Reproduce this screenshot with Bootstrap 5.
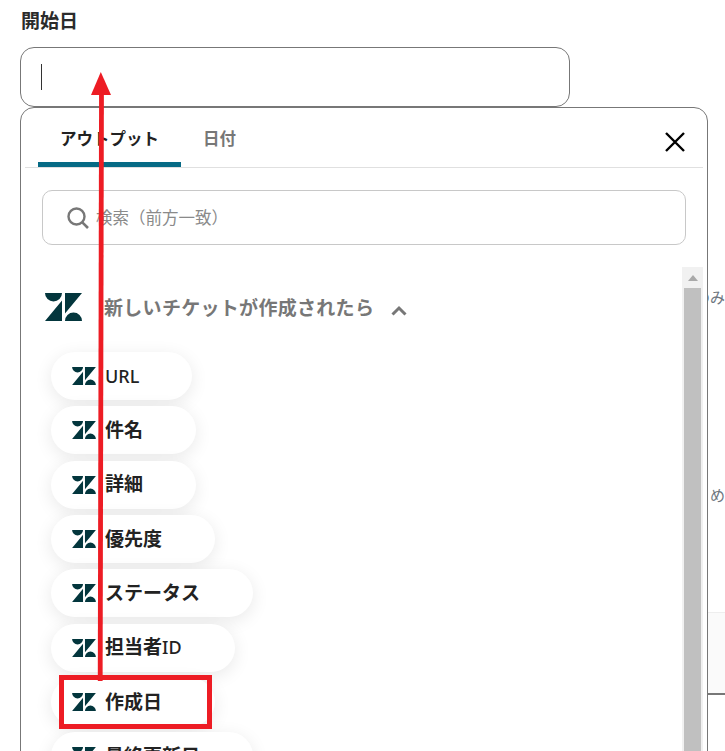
<!DOCTYPE html>
<html lang="ja">
<head>
<meta charset="utf-8">
<title>開始日</title>
<link href="https://cdn.jsdelivr.net/npm/bootstrap@5.3.0/dist/css/bootstrap.min.css" rel="stylesheet">
<style>
html,body{margin:0;height:751px;overflow:hidden;background:#fff;}
body{font-family:"Noto Sans CJK JP","Noto Sans",sans-serif;color:#222;position:relative;}
.pg-label{font-size:19px;font-weight:700;line-height:26px;margin:7px 0 14px 21px;color:#2b2b2b;}
.pg-input{width:550px;height:60px;margin-left:20px;border:1px solid #777;border-radius:14px;padding-left:20px;}
.pg-caret{width:1px;height:26px;background:#333;}
.bg-note{font-size:15px;color:#6e7780;line-height:22px;white-space:nowrap;}
.bg-a{margin-top:179px;}
.bg-b{margin-top:176px;}
.bg-row{margin:106px 0 0 auto;width:17px;height:83px;background:#fafafa;border-top:1px solid #eee;border-bottom:2px solid #777;}
.pop{position:absolute;left:20px;top:107px;width:688px;height:660px;background:#fff;border:1px solid #777;border-radius:14px;padding:0 4px;}
.pop-tabs{height:60px;border-bottom:1px solid #e0e0e0;padding-left:13px;}
.pop-tab{height:59px;padding:18px 22px 0;font-size:16.5px;font-weight:700;line-height:24px;color:#777;border-bottom:5px solid transparent;}
.pop-tab-on{color:#222;border-bottom-color:#066a85;border-radius:3px 3px 0 0;}
.pop-x{margin:23px 17px 0 auto;width:22px;height:22px;}
.pop-search{margin:22px 17px 0 17px;height:55px;border:1px solid #c8c8c8;border-radius:10px;padding-left:24px;gap:7px;}
.pop-search input{border:0;outline:0;flex:1;font-size:16.5px;color:#333;background:transparent;padding:0;font-family:inherit;}
.pop-search input::placeholder{color:#8a8a8a;}
.pop-body{margin-top:22px;height:520px;}
.pop-list{padding:16px 0 0 26px;}
.zk-head{height:48px;font-size:19px;font-weight:700;letter-spacing:.3px;color:#777;gap:22px;margin:0 0 21px -6px;}
.zk-chev{margin:6px 0 0 -5px;}
.zk-pill{height:48px;margin-bottom:6.35px;width:max-content;border-radius:24px;background:#fff;box-shadow:0 4px 18px rgba(0,0,0,.09);padding:0 53px 0 21px;gap:9px;font-size:19px;font-weight:700;color:#222;}
.zk-pill > span{margin-top:-2px;}
.zk-latin{font-family:"Noto Sans",sans-serif;font-size:18px;font-weight:500;}
.zk-pill > .zk-latin{margin-top:0;}
.pop-scroll{width:21px;height:520px;background:#f1f1f1;padding:0 2px;margin-left:auto;}
.pop-scroll-up{height:21px;}
.pop-scroll-thumb{height:480px;background:#c0c0c0;}
.note-overlay{position:absolute;left:0;top:0;pointer-events:none;}
.red-box{position:absolute;left:59px;top:675px;width:153px;height:54px;border:5px solid #ed1c24;}
</style>
</head>
<body>
<svg width="0" height="0" class="d-block" style="position:absolute"><defs>
<symbol id="zk" viewBox="0 0 37 28"><path fill="#03363d" d="M0 0H17A8.5 8.5 0 0 1 0 0ZM20 0H37L20 20.5ZM17 7.5V28H0ZM20 28A8.5 8.5 0 0 1 37 28Z"/></symbol>
</defs></svg>

<main>
  <div class="pg-label">開始日</div>
  <div class="pg-input d-flex align-items-center"><span class="pg-caret"></span></div>
  <div class="bg-note bg-a text-end">のみ</div>
  <div class="bg-note bg-b text-end">め</div>
  <div class="bg-row"></div>
</main>

<section class="pop">
  <div class="pop-tabs d-flex align-items-start">
    <div class="pop-tab pop-tab-on">アウトプット</div>
    <div class="pop-tab">日付</div>
    <svg class="pop-x" viewBox="0 0 22 22"><path d="M2 2L20 20M20 2L2 20" stroke="#000" stroke-width="2.4" fill="none"/></svg>
  </div>
  <div class="pop-search d-flex align-items-center">
    <svg width="22" height="22" viewBox="0 0 22 22"><circle cx="9.5" cy="9.5" r="8" fill="none" stroke="#777" stroke-width="2.4"/><path d="M15.3 15.3L21 21" stroke="#777" stroke-width="2.6"/></svg>
    <input type="text" placeholder="検索（前方一致）">
  </div>
  <div class="pop-body d-flex">
    <div class="pop-list">
      <div class="zk-head d-flex align-items-center">
        <svg width="37" height="28"><use href="#zk"/></svg>
        <span>新しいチケットが作成されたら</span>
        <svg class="zk-chev" width="16" height="11" viewBox="0 0 16 11"><path d="M1.5 9.5L8 3L14.5 9.5" fill="none" stroke="#777" stroke-width="3"/></svg>
      </div>
      <div class="zk-pill d-flex align-items-center"><svg width="24" height="18"><use href="#zk"/></svg><span class="zk-latin">URL</span></div>
      <div class="zk-pill d-flex align-items-center"><svg width="24" height="18"><use href="#zk"/></svg><span>件名</span></div>
      <div class="zk-pill d-flex align-items-center"><svg width="24" height="18"><use href="#zk"/></svg><span>詳細</span></div>
      <div class="zk-pill d-flex align-items-center"><svg width="24" height="18"><use href="#zk"/></svg><span>優先度</span></div>
      <div class="zk-pill d-flex align-items-center"><svg width="24" height="18"><use href="#zk"/></svg><span>ステータス</span></div>
      <div class="zk-pill d-flex align-items-center"><svg width="24" height="18"><use href="#zk"/></svg><span>担当者<span class="zk-latin">ID</span></span></div>
      <div class="zk-pill d-flex align-items-center"><svg width="24" height="18"><use href="#zk"/></svg><span>作成日</span></div>
      <div class="zk-pill d-flex align-items-center"><svg width="24" height="18"><use href="#zk"/></svg><span>最終更新日</span></div>
    </div>
    <div class="pop-scroll">
      <div class="pop-scroll-up d-flex align-items-center justify-content-center"><svg width="10" height="6" viewBox="0 0 10 6"><path d="M0 6L5 0L10 6Z" fill="#a9a9a9"/></svg></div>
      <div class="pop-scroll-thumb"></div>
    </div>
  </div>
</section>

<div class="red-box"></div>
<svg class="note-overlay" width="725" height="751" viewBox="0 0 725 751"><path d="M101.5 90L100.2 681" stroke="#ed1c24" stroke-width="4.8" fill="none"/><path d="M100.8 72L111 95H91Z" fill="#ed1c24"/></svg>
</body>
</html>
